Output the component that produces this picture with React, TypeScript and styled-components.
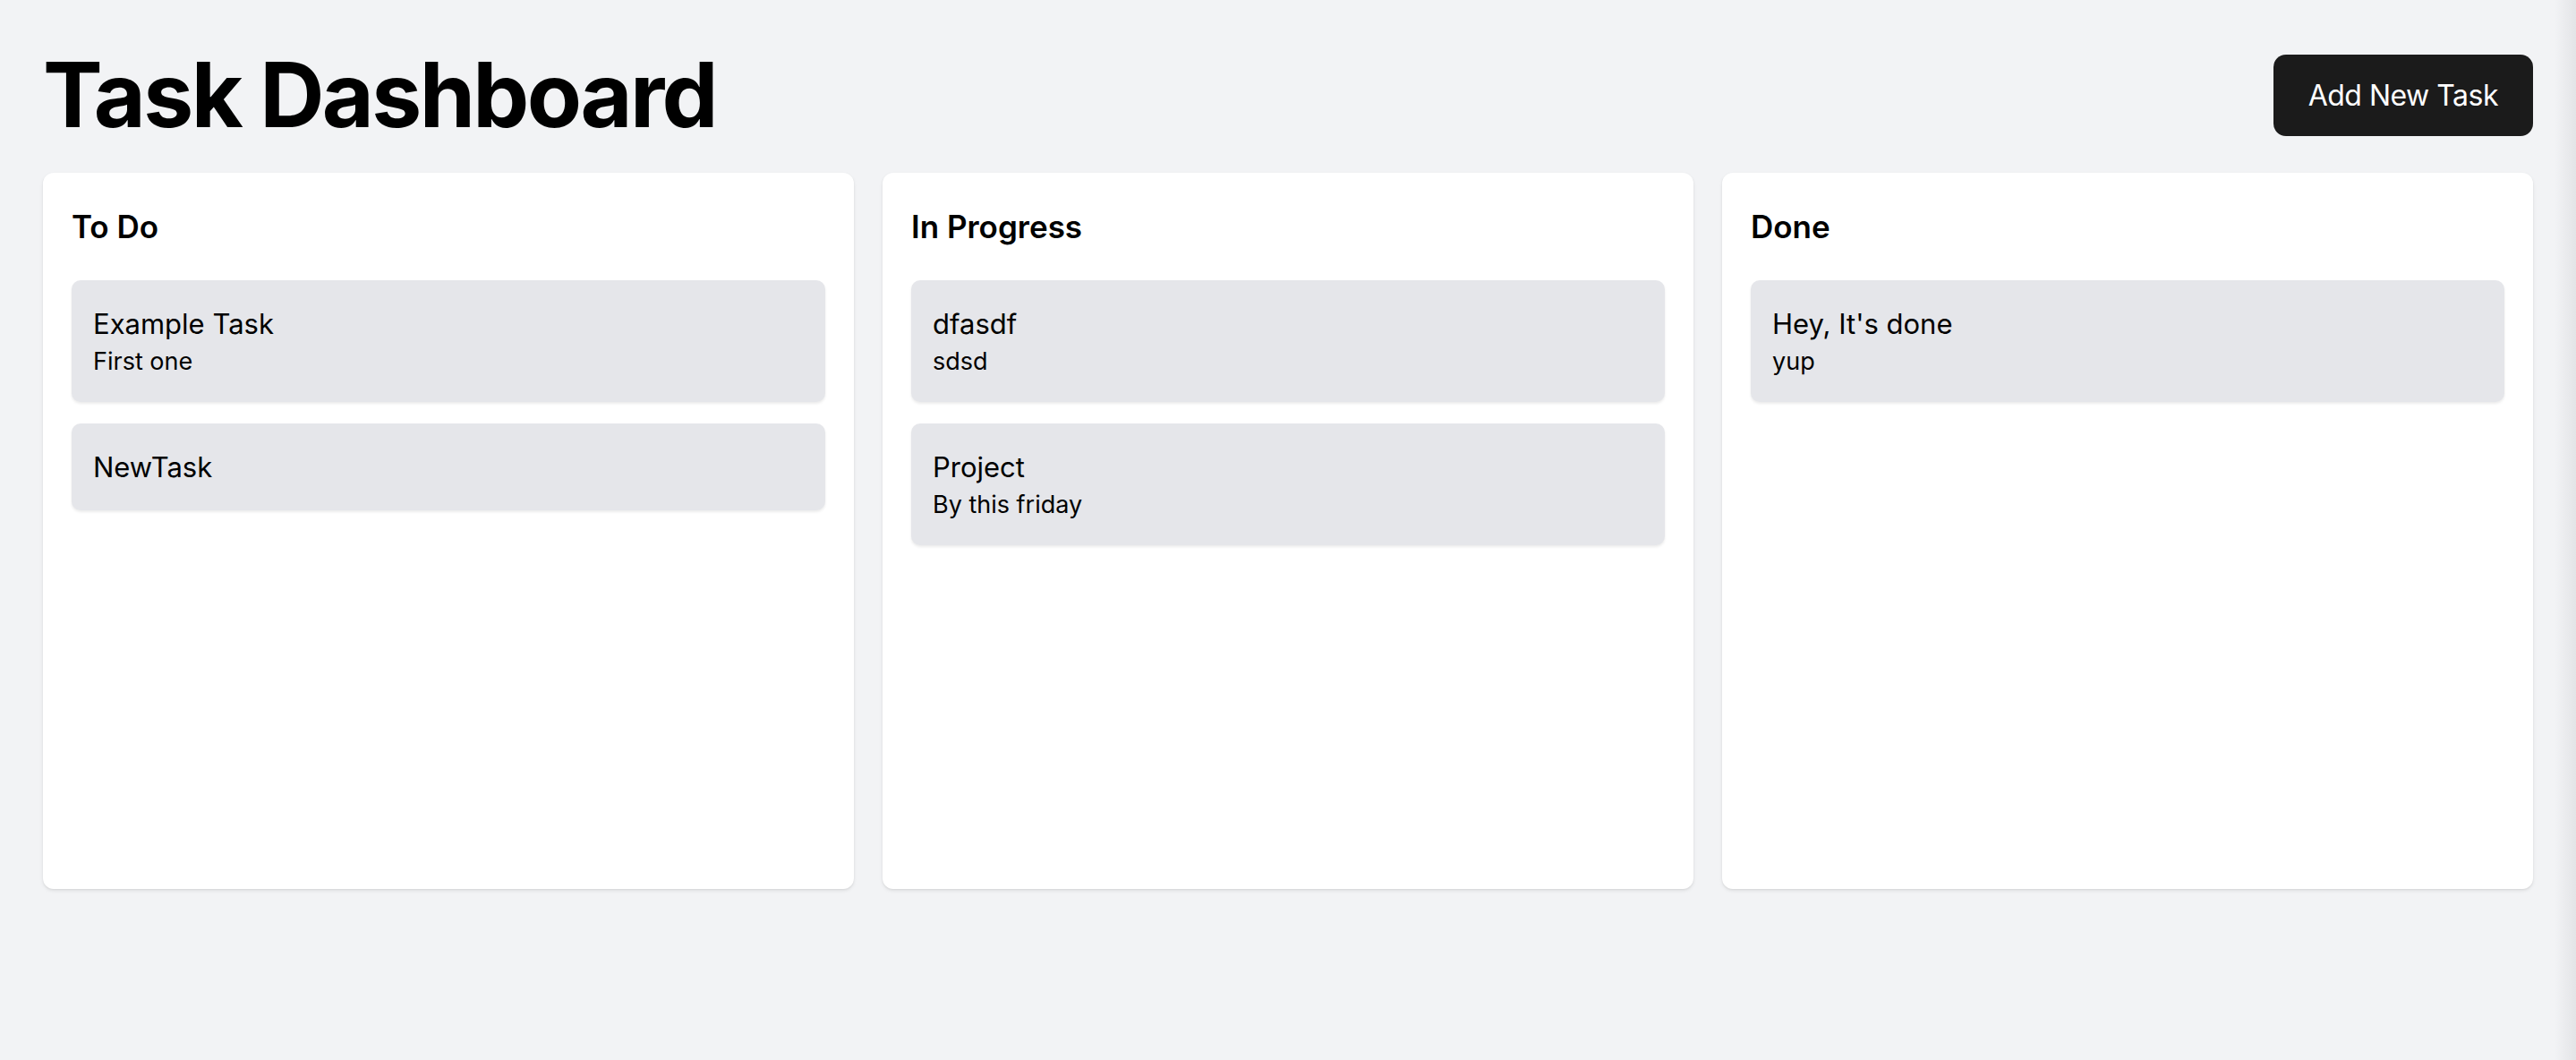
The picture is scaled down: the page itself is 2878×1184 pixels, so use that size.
import React from "react";
import styled, { createGlobalStyle } from "styled-components";

interface Task {
  id: number;
  title: string;
  description?: string;
}

interface ColumnData {
  name: string;
  tasks: Task[];
}

const GlobalStyle = createGlobalStyle`
  html, body {
    margin: 0;
    padding: 0;
    background: #f2f3f5;
  }
  body {
    font-family: Inter, "Noto Sans", "Liberation Sans", sans-serif;
    color: #000;
    -webkit-font-smoothing: antialiased;
  }
  * {
    box-sizing: border-box;
  }
`;

const Page = styled.div`
  min-height: 1184px;
  padding: 48px;
  background: linear-gradient(to right, #f2f3f5 calc(100% - 24px), #e3e4e7 100%);
`;

const Header = styled.header`
  display: flex;
  justify-content: space-between;
  align-items: center;
  margin-bottom: 29px;
`;

const Title = styled.h1`
  margin: 0;
  font-size: 100px;
  line-height: 116px;
  font-weight: 700;
  letter-spacing: -2.6px;
`;

const AddButton = styled.button`
  height: 91px;
  padding: 0 39px;
  border: none;
  border-radius: 14px;
  background: #1b1b1b;
  color: #fff;
  font-family: inherit;
  font-size: 32px;
  font-weight: 400;
  letter-spacing: -0.5px;
  cursor: pointer;
`;

const Board = styled.div`
  display: grid;
  grid-template-columns: repeat(3, 1fr);
  gap: 32px;
`;

const Column = styled.section`
  min-height: 800px;
  padding: 32px;
  background: #fff;
  border-radius: 12px;
  box-shadow: 0 2px 4px rgba(0, 0, 0, 0.08), 0 1px 2px rgba(0, 0, 0, 0.06);
`;

const ColumnTitle = styled.h2`
  margin: 0 0 32px;
  font-size: 35px;
  line-height: 56px;
  font-weight: 600;
`;

const TaskList = styled.div`
  display: flex;
  flex-direction: column;
  gap: 24px;
`;

const TaskCard = styled.div`
  padding: 26px 24px;
  background: #e5e6ea;
  border-radius: 10px;
  box-shadow: 0 2px 3px rgba(0, 0, 0, 0.08);
`;

const TaskTitle = styled.div`
  font-size: 31px;
  line-height: 45px;
  font-weight: 400;
`;

const TaskDescription = styled.div`
  font-size: 27px;
  line-height: 39px;
`;

const columns: ColumnData[] = [
  {
    name: "To Do",
    tasks: [
      { id: 1, title: "Example Task", description: "First one" },
      { id: 2, title: "NewTask" },
    ],
  },
  {
    name: "In Progress",
    tasks: [
      { id: 3, title: "dfasdf", description: "sdsd" },
      { id: 4, title: "Project", description: "By this friday" },
    ],
  },
  {
    name: "Done",
    tasks: [{ id: 5, title: "Hey, It's done", description: "yup" }],
  },
];

const App = () => {
  return (
    <Page>
      <GlobalStyle />
      <Header>
        <Title>Task Dashboard</Title>
        <AddButton>Add New Task</AddButton>
      </Header>

      <Board>
        {columns.map((col) => (
          <Column key={col.name}>
            <ColumnTitle>{col.name}</ColumnTitle>
            <TaskList>
              {col.tasks.map((task) => (
                <TaskCard key={task.id}>
                  <TaskTitle>{task.title}</TaskTitle>
                  {task.description && (
                    <TaskDescription>{task.description}</TaskDescription>
                  )}
                </TaskCard>
              ))}
            </TaskList>
          </Column>
        ))}
      </Board>
    </Page>
  );
};

export default App;
